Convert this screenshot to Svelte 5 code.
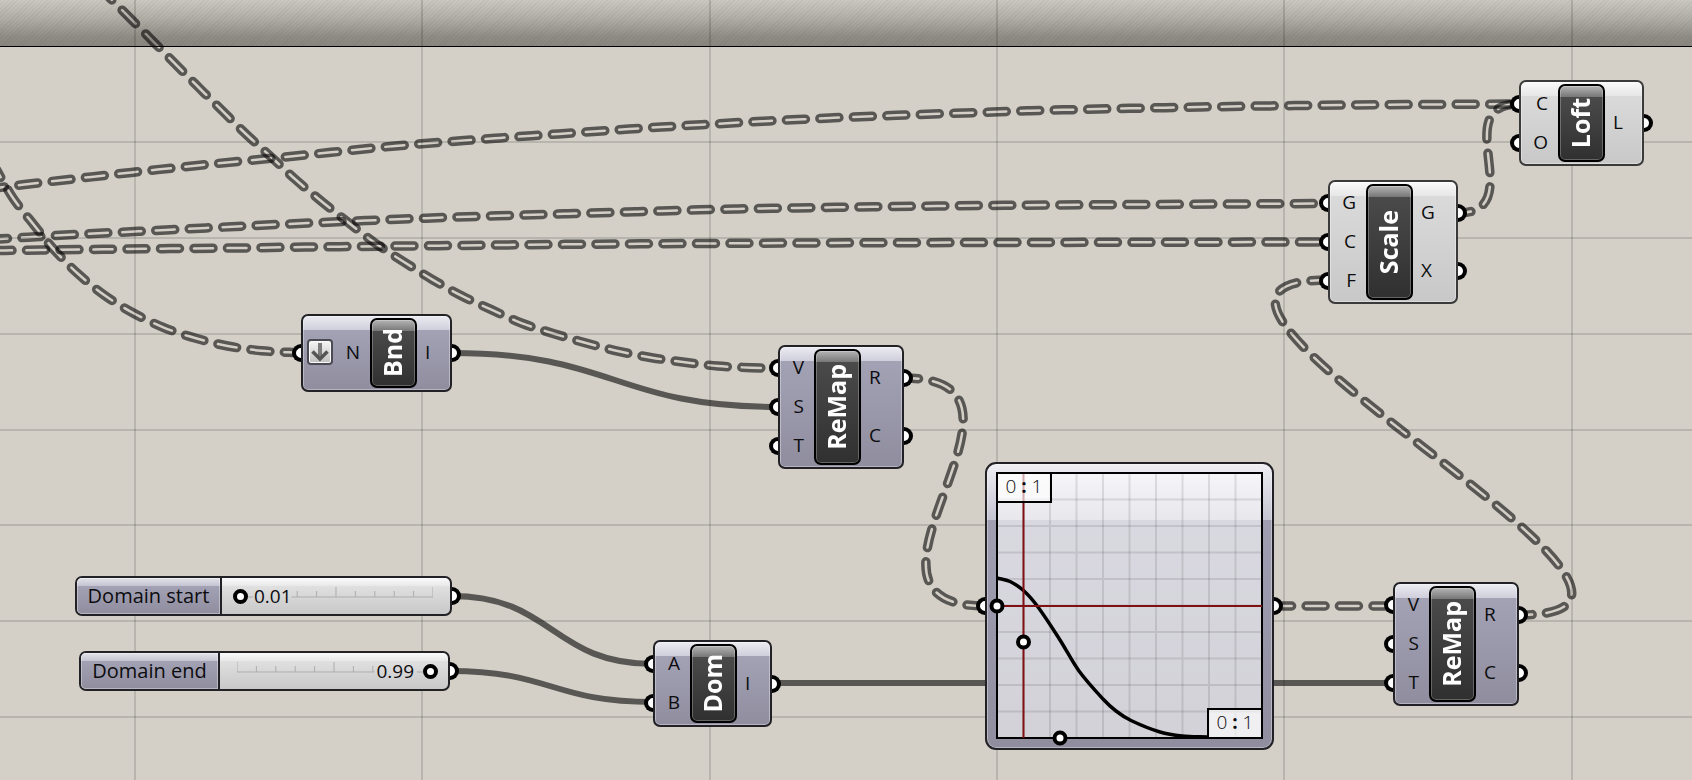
<script lang="ts">
	type Point = [number, number];

	interface Component {
		name: string;
		x: number;
		y: number;
		width: number;
		height: number;
		// widths of the input and output columns
		left: number;
		right: number;
		inputs: string[];
		outputs: string[];
		pale?: boolean;
		flatten?: boolean;
	}

	const components: Component[] = [
		{ name: 'Bnd', x: 301, y: 314, width: 151, height: 78, left: 67, right: 33, inputs: ['N'], outputs: ['I'], flatten: true },
		{ name: 'ReMap', x: 778, y: 345, width: 126, height: 124, left: 34, right: 41, inputs: ['V', 'S', 'T'], outputs: ['R', 'C'] },
		{ name: 'Dom', x: 653, y: 640, width: 119, height: 87, left: 35, right: 33, inputs: ['A', 'B'], outputs: ['I'] },
		{ name: 'ReMap', x: 1393, y: 582, width: 126, height: 124, left: 34, right: 41, inputs: ['V', 'S', 'T'], outputs: ['R', 'C'] },
		{ name: 'Scale', x: 1328, y: 180, width: 130, height: 124, left: 36, right: 43, inputs: ['G', 'C', 'F'], outputs: ['G', 'X'], pale: true },
		{ name: 'Loft', x: 1519, y: 80, width: 125, height: 86, left: 37, right: 37, inputs: ['C', 'O'], outputs: ['L'], pale: true }
	];

	let sliders = $state([
		{ id: 'domain-start', label: 'Domain start', value: 0.01, x: 75, y: 576, width: 377, labelWidth: 145 },
		{ id: 'domain-end', label: 'Domain end', value: 0.99, x: 79, y: 651, width: 371, labelWidth: 139 }
	]);

	// bezier with horizontal tangents, `pull` is the handle length
	function wire(from: Point, to: Point, pull: number) {
		return `M${from} C${from[0] + pull},${from[1]} ${to[0] - pull},${to[1]} ${to}`;
	}

	// smooth curve through a list of points
	function spline(p: Point[]) {
		let d = `M${p[0]}`;
		for (let i = 0; i < p.length - 1; i++) {
			const a = p[i - 1] ?? p[i];
			const b = p[i];
			const c = p[i + 1];
			const e = p[i + 2] ?? c;
			const k = Math.hypot(c[0] - b[0], c[1] - b[1]) / 3;
			const la = Math.hypot(c[0] - a[0], c[1] - a[1]) || 1;
			const lb = Math.hypot(e[0] - b[0], e[1] - b[1]) || 1;
			d += ` C${b[0] + ((c[0] - a[0]) / la) * k},${b[1] + ((c[1] - a[1]) / la) * k}`;
			d += ` ${c[0] - ((e[0] - b[0]) / lb) * k},${c[1] - ((e[1] - b[1]) / lb) * k} ${c}`;
		}
		return d;
	}

	const solid = [
		wire([452, 353], [778, 407], 163),
		wire([452, 596], [653, 664], 101),
		wire([450, 671], [653, 702], 101),
		wire([772, 683], [1393, 683], 300)
	];

	const dashed = [
		{
			d: spline([[-5, 188], [29, 184], [129, 172.7], [195, 165.7], [295, 156], [395, 146], [495, 138.3], [562, 133.7], [629, 129], [696, 125], [763, 121.3], [830, 118], [897, 115.3], [964, 113], [1030, 110.7], [1200, 107], [1349, 105], [1519, 104]]),
			offset: 9.5
		},
		{
			d: spline([[-2, 239], [32, 237], [65, 235], [166, 230], [266, 225], [367, 220.5], [467, 216.7], [568, 213.7], [635, 211.7], [735, 209], [836, 207.3], [937, 206], [1004, 205.3], [1328, 203.5]]),
			offset: 9.5
		},
		{
			d: spline([[-31, 251], [2, 250.5], [103, 249.3], [170, 248.6], [238, 248], [305, 247], [439, 245.7], [573, 244.3], [740, 243.3], [908, 242.7], [1328, 242]]),
			offset: 9.5
		},
		{
			d: spline([[82, -31], [105, -7], [128.6, 16.7], [152, 40.3], [175.7, 64.3], [199.3, 88], [223.2, 111.7], [247, 135], [272, 157.7], [296.4, 180.3], [322, 201.7], [348.6, 222.7], [375, 243], [403.6, 261.7], [432, 279.3], [461.4, 295.7], [491.4, 309.7], [522, 323.3], [554, 333.7], [586, 343], [618.7, 351.3], [651.7, 357.7], [684.7, 362.3], [717.7, 366], [751.3, 367.7], [778, 368]]),
			offset: 9.5
		},
		{
			d: spline([[-4, 169], [13.2, 198.3], [34, 225], [55, 250.7], [78.6, 274.3], [104.6, 295.3], [133.2, 313], [163.2, 327.3], [195, 338], [227.5, 346], [261.4, 350.7], [302, 353]]),
			offset: 9.5
		},
		{ d: wire([904, 378], [985, 606], 164), offset: 4.5 },
		{ d: wire([1274, 606], [1393, 606], 60), offset: 1.5 },
		{ d: wire([1519, 615], [1328, 280], 240), offset: 6 },
		{ d: wire([1458, 213], [1519, 104], 73), offset: 6 }
	];

	const columns = Array.from({ length: 12 }, (_, i) => Math.round(135 + i * 287.35));
	const rows = Array.from({ length: 16 }, (_, i) => Math.round(142.2 + i * 95.8));
	const cells = [1, 2, 3, 4, 5, 6, 7, 8, 9].map((i) => i * 26.5);
	const ticks = [0, 1, 2, 3, 4, 5, 6, 7, 8, 9, 10];
	const handles: Point[] = [[0, 133], [26.5, 169], [63, 265]];
	const curve = spline([[0, 105], [13, 108.5], [27, 118], [41, 134], [63, 167], [82, 198], [106, 226], [119, 238], [134, 247.5], [163, 259], [185, 263], [211, 264]]);

	// ticks under the number are left out
	function tickVisible(i: number, value: number) {
		return value < 0.5 ? i / 10 > value + 0.25 : i / 10 < value - 0.25;
	}
</script>

<main class="canvas">
	<div class="band"></div>

	<svg class="wires" aria-hidden="true">
		<g class="grid">
			{#each columns as x}
				<line x1={x} x2={x} y1="0" y2="100%" />
			{/each}
			{#each rows as y}
				<line x1="0" x2="100%" y1={y} y2={y} />
			{/each}
		</g>
		{#each dashed as w, i}
			<mask id="dash-{i}" maskUnits="userSpaceOnUse" x="-50" y="-50" width="4000" height="3000">
				<path class="dash outer" d={w.d} stroke-dashoffset={w.offset} />
				<path class="dash inner" d={w.d} stroke-dashoffset={w.offset} />
			</mask>
			<path class="wire double" d={w.d} mask="url(#dash-{i})" />
		{/each}
		{#each solid as d}
			<path class="wire" {d} />
		{/each}
	</svg>

	{#each components as c}
		<section class="node" class:pale={c.pale} style:left="{c.x}px" style:top="{c.y}px" style:width="{c.width}px" style:height="{c.height}px">
			<ul class="inputs" style:width="{c.left}px">
				{#each c.inputs as name}
					<li class="port in">
						{#if c.flatten}
							<svg class="flatten" viewBox="0 0 26 26" aria-hidden="true">
								<defs>
									<linearGradient id="flatten-fill" x1="0" y1="0" x2="0" y2="1">
										<stop offset="0" stop-color="#f4f4f4" />
										<stop offset="1" stop-color="#c2c2c2" />
									</linearGradient>
								</defs>
								<rect x="1" y="1" width="24" height="24" rx="3" fill="#fafafa" stroke="#4c4b54" stroke-width="2" />
								<rect x="3" y="3" width="20" height="20" rx="1" fill="url(#flatten-fill)" />
								<path d="M13 4V20" stroke="#7c7c7c" stroke-width="4" />
								<path d="M5.500 12.500L13 20L20.500 12.500" fill="none" stroke="#555" stroke-width="3.500" />
							</svg>
						{/if}
						<span>{name}</span>
					</li>
				{/each}
			</ul>
			<h2 class="core"><span>{c.name}</span></h2>
			<ul class="outputs" style:width="{c.right}px">
				{#each c.outputs as name}
					<li class="port out"><span>{name}</span></li>
				{/each}
			</ul>
		</section>
	{/each}

	{#each sliders as s}
		<div class="slider" style:left="{s.x}px" style:top="{s.y}px" style:width="{s.width}px">
			<label for={s.id} style:width="{s.labelWidth}px">{s.label}</label>
			<div class="track">
				<svg class="scale" viewBox="0 0 192 12" preserveAspectRatio="none" aria-hidden="true">
					<path d={s.value < 0.5 ? 'M8 11H14M52 11H192' : 'M0 11H136M178 11H184'} />
					{#each ticks as i}
						{#if tickVisible(i, s.value)}
							<path d="M{i * 19.2} 11V{i % 5 ? 5 : 1}" />
						{/if}
					{/each}
				</svg>
				<input id={s.id} type="range" min="0" max="1" step="0.01" bind:value={s.value} />
				<output for={s.id} class:high={s.value >= 0.5}>{s.value.toFixed(2)}</output>
			</div>
			<i class="plug right"></i>
		</div>
	{/each}

	<section class="node graph">
		<i class="plug left"></i>
		<svg viewBox="0 0 265 265" aria-hidden="true">
			<rect width="265" height="265" class="sheet" />
			<g class="cells">
				{#each cells as p}
					<path d="M{p} 0V265M0 {p}H265" />
				{/each}
			</g>
			<path class="curve" d={curve} />
			<rect width="265" height="265" class="frame" />
			<path class="guide" d="M26.500 1V265M0 133H265" />
			{#each handles as [cx, cy]}
				<circle {cx} {cy} r="5.500" />
			{/each}
		</svg>
		<div class="range top"><span>0</span><b>:</b><span>1</span></div>
		<div class="range bottom"><span>0</span><b>:</b><span>1</span></div>
		<i class="plug right"></i>
	</section>
</main>

<style>
	:global(body) {
		background: #d4d0c8;
	}

	.canvas {
		position: relative;
		min-height: 100vh;
		overflow: hidden;
		background: #d4d0c8;
		color: #0c0c0e;
		font-family: 'Open Sans', 'Noto Sans', sans-serif;
		font-size: 19px;
		line-height: 24px;
	}

	.band {
		height: 46px;
		border-bottom: 1px solid #000;
		background:
			repeating-linear-gradient(135deg, rgba(0, 0, 0, 0.04) 0 1px, transparent 1px 3px),
			linear-gradient(#cbc8c0, #b1aea7 40%, #8f8c85 80%, #8a8781);
	}

	.wires {
		position: absolute;
		inset: 0;
		width: 100%;
		height: 100%;
	}

	.grid line {
		stroke: rgba(0, 0, 0, 0.13);
		stroke-width: 2;
	}

	.wire {
		fill: none;
		stroke: rgba(0, 0, 0, 0.58);
		stroke-width: 6;
	}

	.double {
		stroke-width: 12;
	}

	.dash {
		fill: none;
		stroke-dasharray: 19 14.500;
		stroke-linecap: round;
	}

	.outer {
		stroke: #fff;
		stroke-width: 9.500;
	}

	.inner {
		stroke: #000;
		stroke-width: 2.500;
	}

	.node {
		position: absolute;
		box-sizing: border-box;
		display: flex;
		justify-content: space-between;
		padding: 2px 0;
		border: 2px solid #222226;
		border-radius: 7px;
		background: linear-gradient(#ececf2, #cfcedb 14px, #a3a2b5 14px, #8f8d9e);
		box-shadow: inset 0 0 0 1px rgba(255, 255, 255, 0.35);
	}

	.pale {
		border-color: #3a3a3a;
		background: linear-gradient(#fafafa, #e6e6e6 14px, #dadada 14px, #c8c8c8);
	}

	ul {
		display: flex;
		flex-direction: column;
		margin: 0;
		padding: 0;
		list-style: none;
	}

	.port {
		position: relative;
		flex: 1;
		display: flex;
		align-items: center;
		padding-bottom: 2px;
	}

	.in {
		justify-content: flex-end;
		padding-right: 10px;
	}

	.out {
		padding-left: 8px;
	}

	.port::before,
	.plug {
		content: '';
		position: absolute;
		top: 50%;
		box-sizing: border-box;
		width: 9px;
		height: 18px;
		margin-top: -9px;
		border: 4px solid #000;
		background: #fff;
	}

	.in::before,
	.plug.left {
		left: -11px;
		border-right: 0;
		border-radius: 9px 0 0 9px;
	}

	.out::before,
	.plug.right {
		right: -11px;
		border-left: 0;
		border-radius: 0 9px 9px 0;
	}

	.flatten {
		width: 26px;
		height: 26px;
		margin-right: auto;
		margin-left: 4px;
	}

	.core {
		display: flex;
		align-items: center;
		justify-content: center;
		box-sizing: border-box;
		width: 47px;
		margin: 0;
		padding-right: 4px;
		border: 2px solid #000;
		border-radius: 7px;
		background: linear-gradient(#b4b4b4, #777 11px, #4a4a4a 11px, #303030);
		box-shadow: inset 0 0 0 1px rgba(255, 255, 255, 0.25);
		color: #fff;
		font-size: 25px;
		line-height: 30px;
	}

	.core span {
		writing-mode: vertical-rl;
		transform: rotate(180deg);
	}

	.slider {
		position: absolute;
		box-sizing: border-box;
		display: flex;
		height: 40px;
		border: 2px solid #222226;
		border-radius: 7px;
		background: linear-gradient(#fafafa, #e8e8e8 8px, #e0e0e0 8px, #c8c8c8);
	}

	.slider label {
		box-sizing: border-box;
		border-right: 2px solid #222226;
		border-radius: 5px 0 0 5px;
		background: linear-gradient(#e2e2ea, #c4c3d1 8px, #a3a2b5 8px, #8f8d9e);
		box-shadow: inset 0 0 0 1px rgba(255, 255, 255, 0.35);
		font-size: 20px;
		line-height: 36px;
		text-align: center;
	}

	.track {
		position: relative;
		flex: 1;
		display: flex;
		align-items: center;
		padding: 0 8px 0 9px;
	}

	.scale {
		position: absolute;
		top: 8px;
		left: 17px;
		width: calc(100% - 34px);
		height: 12px;
	}

	.scale path {
		fill: none;
		stroke: #adadad;
		stroke-width: 1;
	}

	.track input {
		position: relative;
		width: 100%;
		height: 16px;
		margin: 0;
		appearance: none;
		background: none;
	}

	.track input::-webkit-slider-thumb {
		appearance: none;
		box-sizing: border-box;
		width: 15px;
		height: 15px;
		border: 4px solid #000;
		border-radius: 50%;
		background: #fff;
	}

	.track output {
		position: absolute;
		left: 32px;
		pointer-events: none;
	}

	.track output.high {
		right: 34px;
		left: auto;
	}

	.graph {
		top: 462px;
		left: 985px;
		width: 289px;
		height: 288px;
		padding: 0;
		border-radius: 11px;
		background: linear-gradient(#efeff4, #c4c3d1 56px, #a09fb2 56px, #8f8d9e);
	}

	.graph svg {
		width: 265px;
		height: 265px;
		margin: 9px 10px;
		overflow: visible;
	}

	.sheet {
		fill: rgba(255, 255, 255, 0.6);
	}

	.cells path {
		stroke: rgba(0, 0, 0, 0.1);
		stroke-width: 2;
	}

	.curve {
		fill: none;
		stroke: #000;
		stroke-width: 3.500;
	}

	.guide {
		stroke: #7f1014;
		stroke-width: 2;
	}

	.frame {
		fill: none;
		stroke: #000;
		stroke-width: 2;
	}

	.graph circle {
		fill: #fff;
		stroke: #000;
		stroke-width: 4;
	}

	.range {
		position: absolute;
		display: grid;
		grid-template-columns: repeat(3, 13px);
		justify-content: center;
		box-sizing: border-box;
		width: 56px;
		height: 31px;
		border: 2px solid #000;
		background: rgba(255, 255, 255, 0.65);
		font-weight: 300;
		text-align: center;
	}

	.range b {
		font-weight: 700;
	}

	.top {
		top: 8px;
		left: 9px;
	}

	.bottom {
		top: 244px;
		left: 220px;
	}
</style>
